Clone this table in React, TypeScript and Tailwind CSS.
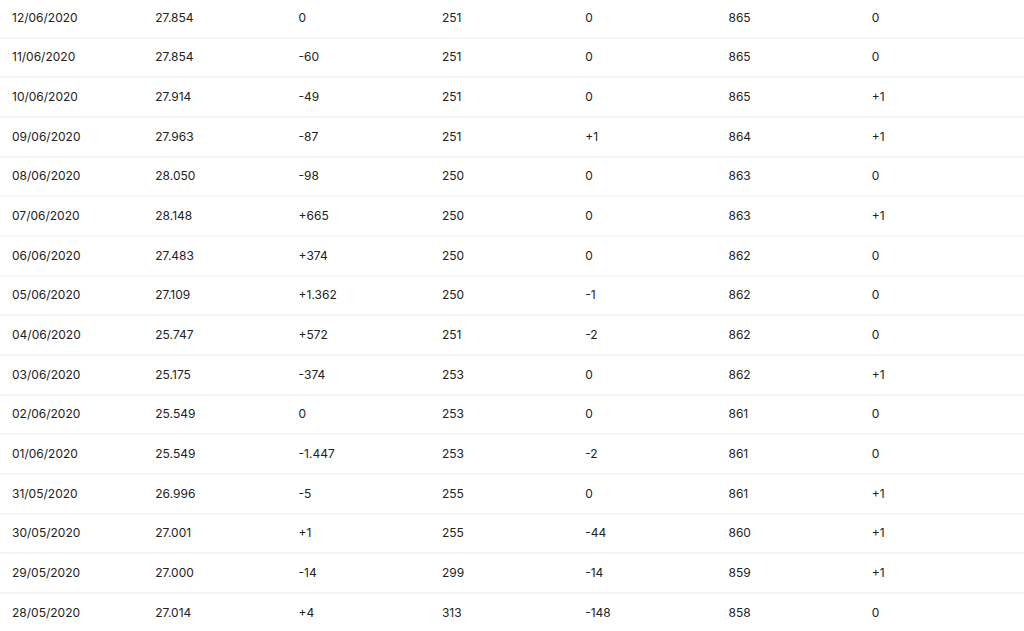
const rows: string[][] = [
  ["12/06/2020", "27.854", "0", "251", "0", "865", "0"],
  ["11/06/2020", "27.854", "-60", "251", "0", "865", "0"],
  ["10/06/2020", "27.914", "-49", "251", "0", "865", "+1"],
  ["09/06/2020", "27.963", "-87", "251", "+1", "864", "+1"],
  ["08/06/2020", "28.050", "-98", "250", "0", "863", "0"],
  ["07/06/2020", "28.148", "+665", "250", "0", "863", "+1"],
  ["06/06/2020", "27.483", "+374", "250", "0", "862", "0"],
  ["05/06/2020", "27.109", "+1.362", "250", "-1", "862", "0"],
  ["04/06/2020", "25.747", "+572", "251", "-2", "862", "0"],
  ["03/06/2020", "25.175", "-374", "253", "0", "862", "+1"],
  ["02/06/2020", "25.549", "0", "253", "0", "861", "0"],
  ["01/06/2020", "25.549", "-1.447", "253", "-2", "861", "0"],
  ["31/05/2020", "26.996", "-5", "255", "0", "861", "+1"],
  ["30/05/2020", "27.001", "+1", "255", "-44", "860", "+1"],
  ["29/05/2020", "27.000", "-14", "299", "-14", "859", "+1"],
  ["28/05/2020", "27.014", "+4", "313", "-148", "858", "0"],
];

export default function App() {
  return (
    <div className="h-[631px] w-[1024px] overflow-hidden bg-white font-['Inter',sans-serif] text-[12px] text-[#222]">
      <div className="-mt-px">
        {rows.map((r) => (
          <div
            key={r[0]}
            className="grid h-[39.67px] grid-cols-[143.3px_143.3px_143.3px_143.3px_143.3px_143.3px_1fr] items-center border-b-2 border-[#f6f6f6] pl-3"
          >
            {r.map((c, i) => (
              <span key={i}>{c}</span>
            ))}
          </div>
        ))}
      </div>
    </div>
  );
}
